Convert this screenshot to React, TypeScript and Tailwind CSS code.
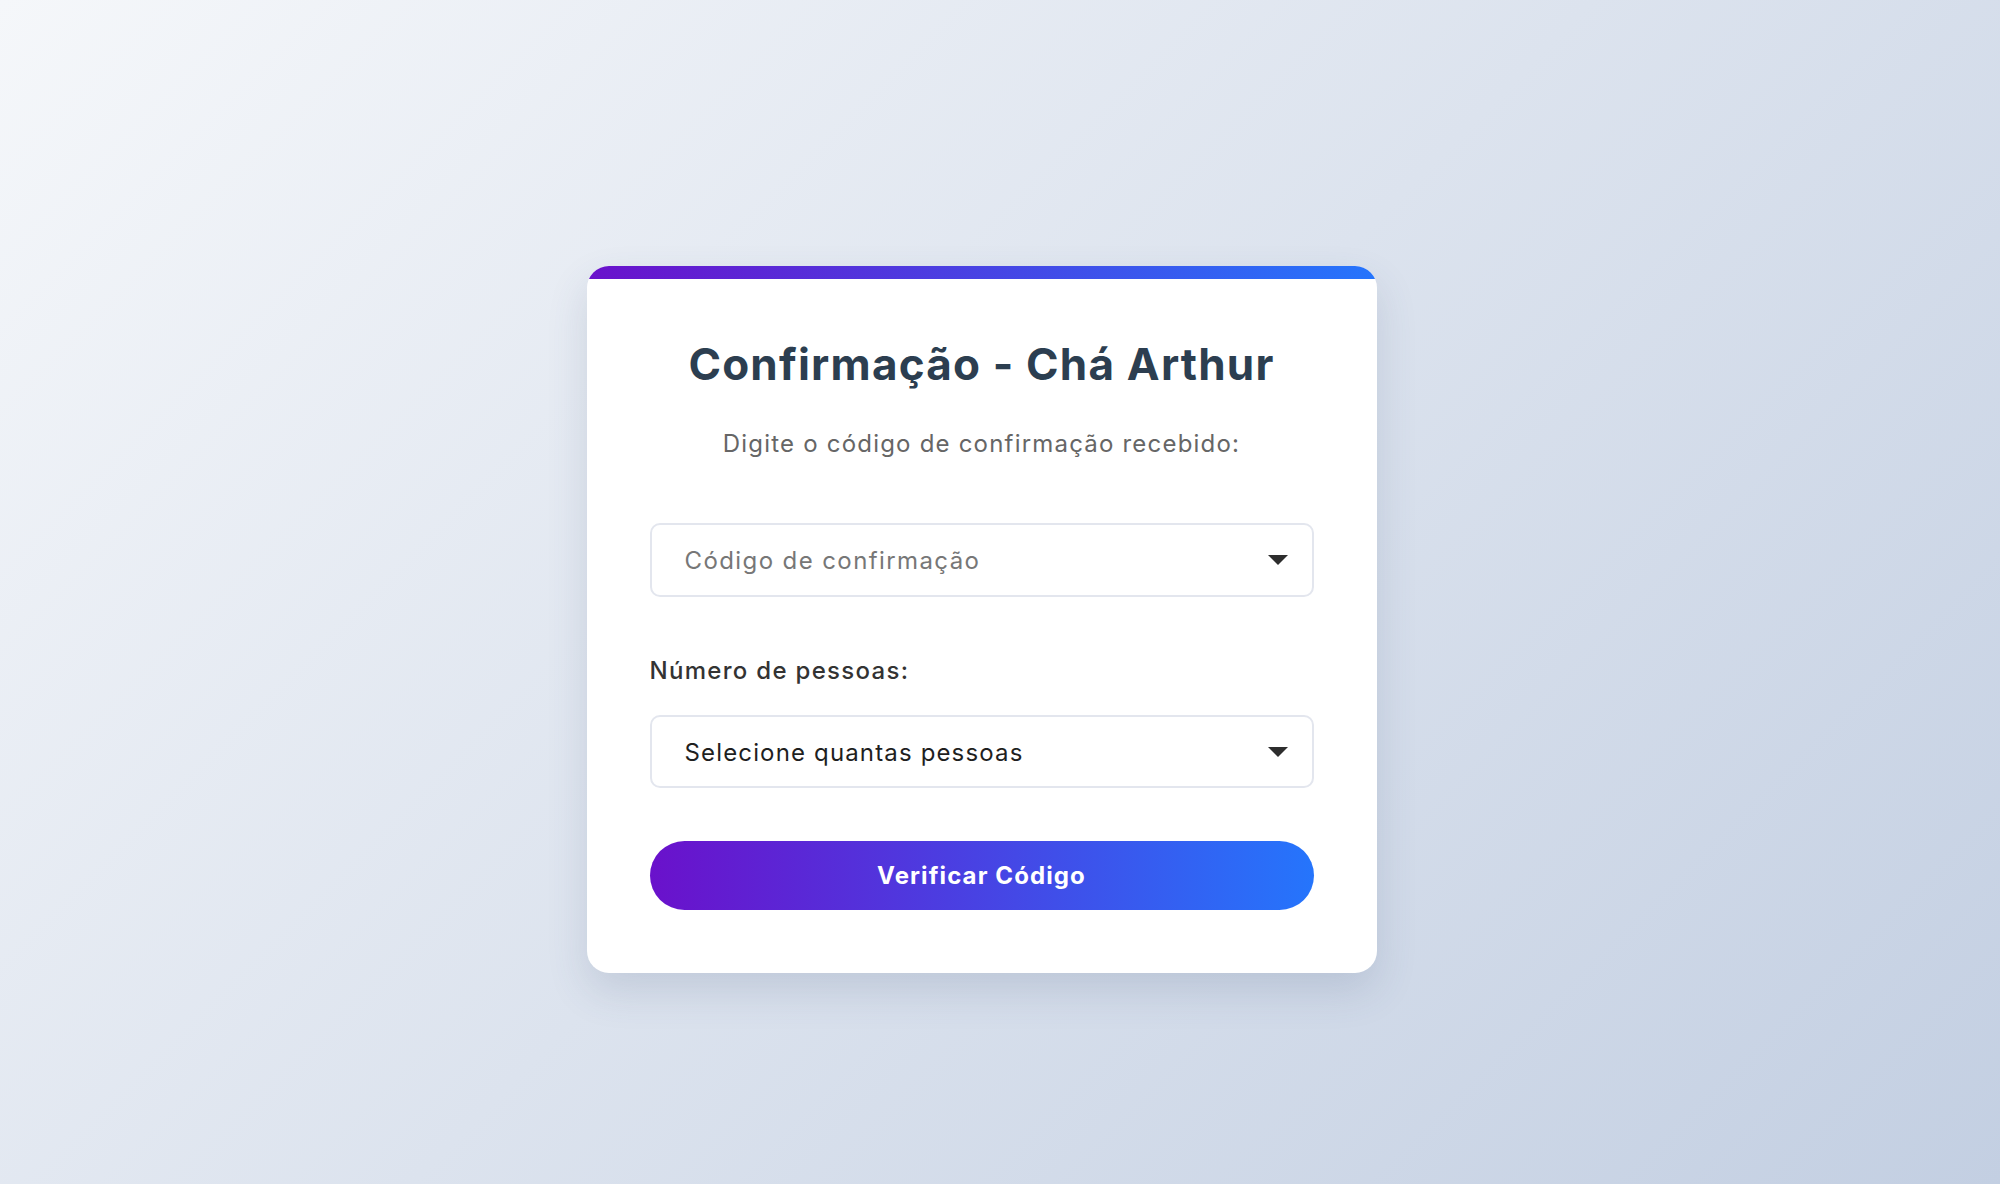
import { useState } from "react";

const font = { fontFamily: "Inter, 'Open Sans', sans-serif" };

const Caret = () => (
  <svg width="20" height="10" viewBox="0 0 20 10" className="shrink-0">
    <path d="M0 0 L20 0 L10 10 Z" fill="#2d2d2d" />
  </svg>
);

const App = () => {
  const [code] = useState("");
  const [people] = useState("");

  return (
    <div
      className="min-h-screen w-full flex items-center justify-center pr-[37px] pt-[55px] bg-[linear-gradient(135deg,#f5f7fa_0%,#c3cfe2_100%)]"
      style={font}
    >
      <div className="w-[790px] bg-white rounded-[22px] overflow-hidden shadow-[0_18px_40px_rgba(60,80,120,0.16)]">
        <div className="h-[13px] bg-[linear-gradient(90deg,#6a11cb_0%,#2575fc_100%)]" />

        <div className="px-[63px] pt-[60px] pb-[63px] flex flex-col">
          <h1 className="text-center text-[44px] leading-[50px] font-bold text-[#2c3e50] tracking-[1.2px]">
            Confirmação - Chá Arthur
          </h1>
          <p className="mt-[38px] text-center text-[24px] leading-[33px] text-[#666666] tracking-[1.2px]">
            Digite o código de confirmação recebido:
          </p>

          <div className="mt-[63px] h-[74px] rounded-[10px] border-2 border-[#e3e6ee] pl-[33px] pr-[24px] flex items-center justify-between">
            <span className="pt-[2px] text-[24px] text-[#777777] tracking-[1.4px]">
              {code || "Código de confirmação"}
            </span>
            <Caret />
          </div>

          <label className="mt-[57px] text-[24px] leading-[33px] font-medium text-[#333333] tracking-[1.3px]">
            Número de pessoas:
          </label>

          <div className="mt-[28px] h-[73px] rounded-[10px] border-2 border-[#e3e6ee] pl-[33px] pr-[24px] flex items-center justify-between">
            <span className="pt-[2px] text-[24px] text-[#1f1f1f] tracking-[1.15px]">
              {people || "Selecione quantas pessoas"}
            </span>
            <Caret />
          </div>

          <button className="mt-[53px] h-[69px] rounded-full text-white text-[24px] font-bold tracking-[1.1px] bg-[linear-gradient(90deg,#6a11cb_0%,#2575fc_100%)]">
            Verificar Código
          </button>
        </div>
      </div>
    </div>
  );
};

export default App;
